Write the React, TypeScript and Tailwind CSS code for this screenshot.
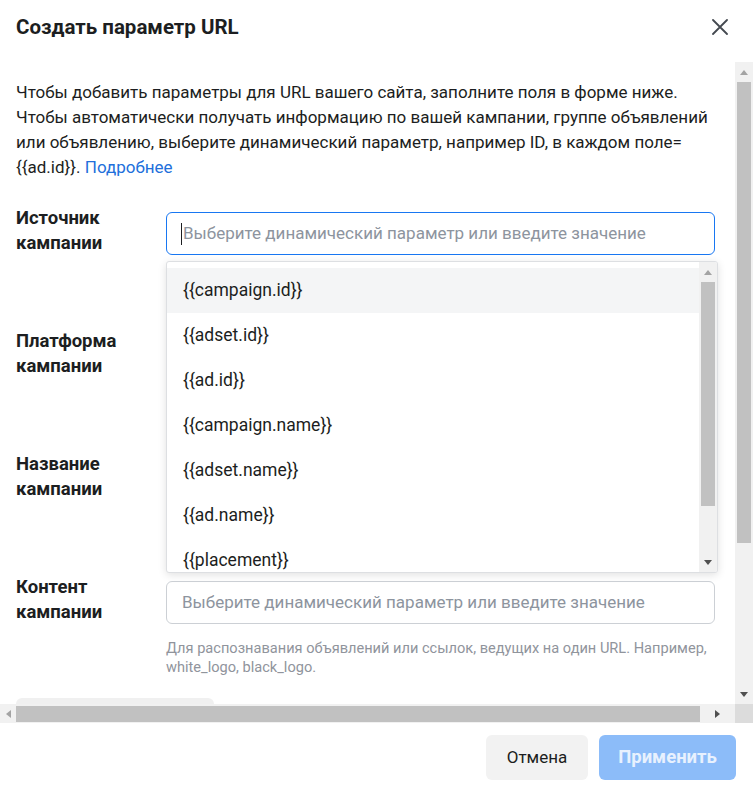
import React from "react";

/* ── small scrollbar pieces ─────────────────────────────────── */
function Arrow({ dir, dark }: { dir: "up" | "down" | "left" | "right"; dark?: boolean }) {
  const pts = {
    up: "0,5 8,5 4,0",
    down: "0,0 8,0 4,5",
    left: "5,0 5,8 0,4",
    right: "0,0 0,8 5,4",
  }[dir];
  const vertical = dir === "up" || dir === "down";
  return (
    <svg
      width={vertical ? 8 : 5}
      height={vertical ? 5 : 8}
      viewBox={vertical ? "0 0 8 5" : "0 0 5 8"}
      className="block"
    >
      <polygon points={pts} fill={dark ? "#505050" : "#a3a3a3"} />
    </svg>
  );
}

const OPTIONS = [
  "{{campaign.id}}",
  "{{adset.id}}",
  "{{ad.id}}",
  "{{campaign.name}}",
  "{{adset.name}}",
  "{{ad.name}}",
  "{{placement}}",
];

const FIELDS = [
  { label: ["Источник", "кампании"], active: true },
  { label: ["Платформа", "кампании"] },
  { label: ["Название", "кампании"] },
];

const PLACEHOLDER = "Выберите динамический параметр или введите значение";

function Label({ lines }: { lines: string[] }) {
  return (
    <div className="w-[150px] shrink-0 text-[18.5px] font-bold leading-[25px] text-[#1c1e21]">
      {lines.map((l) => (
        <div key={l}>{l}</div>
      ))}
    </div>
  );
}

export default function App() {
  return (
    <div
      className="flex h-[786px] w-[753px] flex-col overflow-hidden bg-white text-[#1c1e21]"
      style={{ fontFamily: "Roboto, 'Liberation Sans', sans-serif" }}
    >
      {/* ── header ─────────────────────────────────────────── */}
      <div className="flex h-[62px] shrink-0 items-start justify-between pl-4 pr-[25px] pt-[13px]">
        <h1 className="text-[20.5px] font-bold leading-[28px] text-[#1c1e21]">Создать параметр URL</h1>
        <button type="button" className="mt-[6px] grid h-[16px] w-[16px] place-items-center" title="Закрыть">
          <svg width="16" height="16" viewBox="0 0 16 16">
            <path d="M1 1 L15 15 M15 1 L1 15" stroke="#444950" strokeWidth="1.8" strokeLinecap="round" />
          </svg>
        </button>
      </div>

      {/* ── scrolling body ─────────────────────────────────── */}
      <div className="flex h-[642px] shrink-0">
        <div className="relative flex-1 overflow-hidden pl-4 pt-[18px]">
          <p className="w-[712px] text-[17px] leading-[25px] text-[#1c1e21]">
            Чтобы добавить параметры для URL вашего сайта, заполните поля в форме ниже. Чтобы автоматически
            получать информацию по вашей кампании, группе объявлений или объявлению, выберите динамический
            параметр, например ID, в каждом поле= {"{{ad.id}}"}.{" "}
            <a className="text-[#216fdb]">Подробнее</a>
          </p>

          <div className="mt-[26px]">
            {FIELDS.map((f) => (
              <div key={f.label[0]} className="flex h-[123px] items-start">
                <Label lines={f.label} />
                <div
                  className={[
                    "mt-[6px] flex h-[43px] w-[549px] items-center overflow-hidden whitespace-nowrap rounded-[6px] border pl-[14px] text-[17px]",
                    f.active ? "border-[#1877f2]" : "border-[#ccd0d5]",
                  ].join(" ")}
                >
                  {f.active ? <span className="mr-px h-[22px] w-px shrink-0 bg-[#1c1e21]" /> : null}
                  <span className="text-[#8d949e]">{PLACEHOLDER}</span>
                </div>
              </div>
            ))}

            <div className="flex items-start">
              <Label lines={["Контент", "кампании"]} />
              <div className="w-[549px]">
                <div className="mt-[6px] flex h-[43px] items-center whitespace-nowrap rounded-[6px] border border-[#ccd0d5] pl-[15px] text-[17px] text-[#8d949e]">
                  {PLACEHOLDER}
                </div>
                <p className="mt-[15px] text-[14.6px] leading-[19px] text-[#90949c]">
                  Для распознавания объявлений или ссылок, ведущих на один URL. Например, white_logo, black_logo.
                </p>
              </div>
            </div>

            <div className="mt-[21px] h-[36px] w-[198px] rounded-[6px] bg-[#f0f0f0]" />
          </div>

          {/* ── dropdown menu over the form ───────────────── */}
          <div className="absolute left-[166px] top-[199px] flex h-[312px] w-[552px] overflow-hidden rounded-[3px] border border-[#dddfe2] bg-white shadow-[0_2px_8px_rgba(0,0,0,0.12)]">
            <div className="flex-1 pt-[6px]">
              {OPTIONS.map((o, i) => (
                <div
                  key={o}
                  className={[
                    "flex h-[45px] items-center pl-4 text-[17.5px] text-[#1c1e21]",
                    i === 0 ? "bg-[#f4f5f6]" : "",
                  ].join(" ")}
                >
                  {o}
                </div>
              ))}
            </div>
            <div className="flex w-[18px] flex-col items-center bg-[#f1f1f1]">
              <div className="flex h-[20px] items-center">
                <Arrow dir="up" />
              </div>
              <div className="h-[224px] w-[14px] bg-[#c1c1c1]" />
              <div className="flex-1" />
              <div className="flex h-[20px] items-center">
                <Arrow dir="down" dark />
              </div>
            </div>
          </div>
        </div>

        {/* vertical scrollbar */}
        <div className="flex w-[18px] shrink-0 flex-col items-center bg-[#f1f1f1]">
          <div className="flex h-[20px] items-center">
            <Arrow dir="up" />
          </div>
          <div className="h-[461px] w-[14px] bg-[#c1c1c1]" />
          <div className="flex-1" />
          <div className="flex h-[20px] items-center">
            <Arrow dir="down" dark />
          </div>
        </div>
      </div>

      {/* ── horizontal scrollbar ───────────────────────────── */}
      <div className="flex h-[19px] shrink-0">
        <div className="flex flex-1 items-center bg-[#f1f1f1]">
          <div className="flex w-[16px] justify-center">
            <Arrow dir="left" />
          </div>
          <div className="h-[16px] w-[684px] bg-[#c1c1c1]" />
          <div className="flex flex-1 justify-center">
            <Arrow dir="right" dark />
          </div>
        </div>
        <div className="w-[18px] bg-[#dcdcdc]" />
      </div>

      {/* ── footer ─────────────────────────────────────────── */}
      <div className="flex flex-1 items-start justify-end gap-[11px] pr-[17px] pt-[12px]">
        <button
          type="button"
          className="h-[45px] w-[102px] rounded-[6px] bg-[#f2f2f2] text-[17px] text-[#1c1e21]"
        >
          Отмена
        </button>
        <button
          type="button"
          className="h-[45px] w-[137px] rounded-[6px] bg-[#8cbcf9] text-[18.5px] font-bold text-[#e8f1fe]"
        >
          Применить
        </button>
      </div>
    </div>
  );
}
